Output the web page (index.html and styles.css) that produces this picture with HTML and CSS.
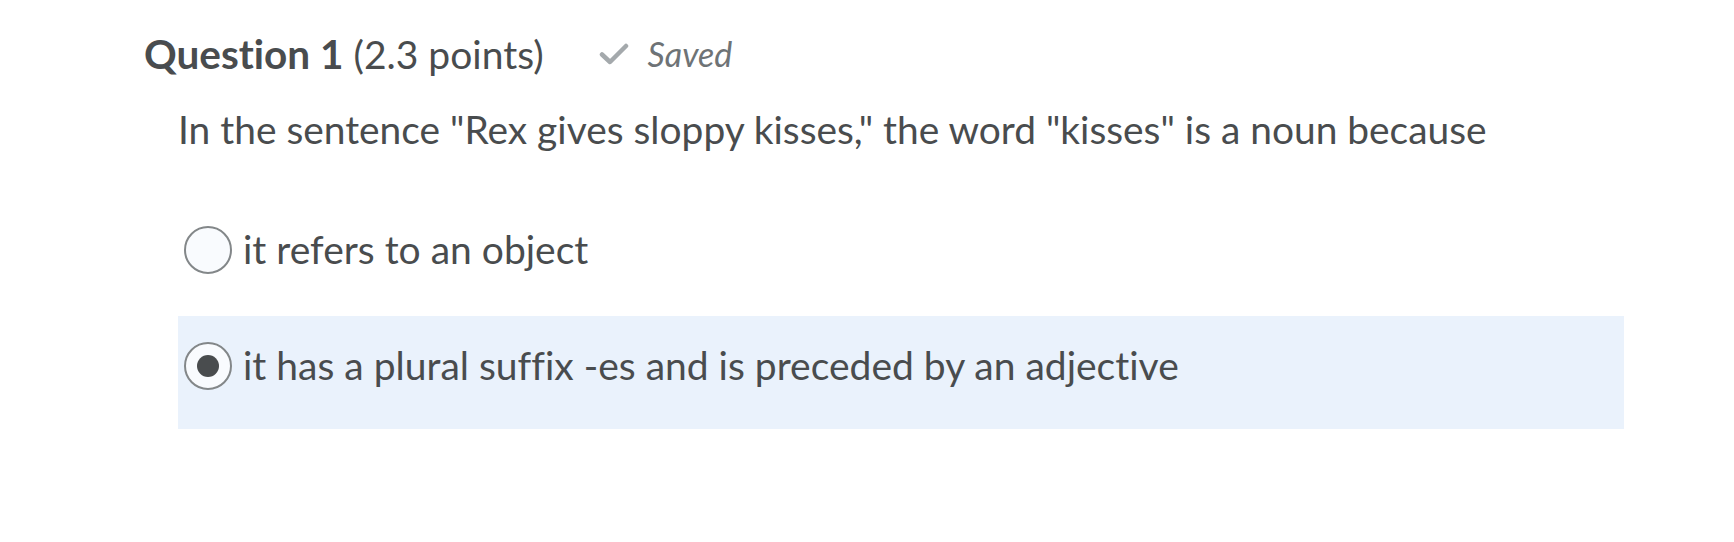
FILE: index.html
```html
<!DOCTYPE html>
<html>
<head>
<meta charset="utf-8">
<link rel="stylesheet" href="styles.css">
</head>
<body>
<div class="quiz">
  <div class="q-header">
    <h2 class="q-title"><strong>Question 1</strong> (2.3 points)</h2>
    <span class="saved">
      <svg class="check" width="30" height="22" viewBox="0 0 30 22"><path d="M3 11.5 L11 19 L27 3" fill="none" stroke="#a4a9ac" stroke-width="4.5" stroke-linecap="round" stroke-linejoin="round"/></svg>
      <span class="saved-text">Saved</span>
    </span>
  </div>
  <div class="q-body">
    <p class="q-text">In the sentence "Rex gives sloppy kisses," the word "kisses" is a noun because</p>
    <div class="options">
      <label class="opt">
        <span class="radio"></span>
        <span class="opt-text">it refers to an object</span>
      </label>
      <label class="opt selected">
        <span class="radio"><span class="dot"></span></span>
        <span class="opt-text">it has a plural suffix -es and is preceded by an adjective</span>
      </label>
    </div>
  </div>
</div>
</body>
</html>
```

FILE: styles.css
```css
html, body {
  margin: 0;
  padding: 0;
  background: #ffffff;
}
body {
  font-family: Lato, "Open Sans", sans-serif;
  color: #494c4e;
  font-variant-ligatures: none;
  font-feature-settings: "liga" 0, "clig" 0;
}
.quiz {
  padding: 31px 0 0 144px;
  width: 1480px;
}
.q-header {
  display: flex;
  align-items: center;
  gap: 55px;
  height: 46px;
}
.q-title {
  margin: 0;
  font-size: 39px;
  font-weight: 400;
  line-height: 46px;
  white-space: nowrap;
}
.q-title strong {
  font-weight: 700;
  font-size: 40.5px;
}
.saved {
  display: flex;
  align-items: center;
  gap: 19px;
  color: #6e7376;
}
.check {
  display: block;
}
.saved-text {
  font-size: 34px;
  font-style: italic;
  line-height: 46px;
}
.q-body {
  padding-left: 34px;
}
.q-text {
  margin: 29px 0 0 0;
  font-size: 38.9px;
  line-height: 46px;
  white-space: nowrap;
}
.options {
  margin-top: 48px;
  display: flex;
  flex-direction: column;
  gap: 3px;
  width: 1446px;
}
.opt {
  display: flex;
  align-items: flex-start;
  gap: 11px;
  height: 113px;
  box-sizing: border-box;
  padding: 26px 0 0 6px;
}
.opt.selected {
  background: #eaf2fc;
}
.radio {
  width: 48px;
  height: 48px;
  box-sizing: border-box;
  border: 2px solid #838789;
  border-radius: 50%;
  background: #f9fbfe;
  display: flex;
  align-items: center;
  justify-content: center;
  flex: none;
}
.dot {
  width: 22px;
  height: 22px;
  border-radius: 50%;
  background: #494c4e;
}
.opt-text {
  font-size: 39px;
  line-height: 46px;
  white-space: nowrap;
}
```
